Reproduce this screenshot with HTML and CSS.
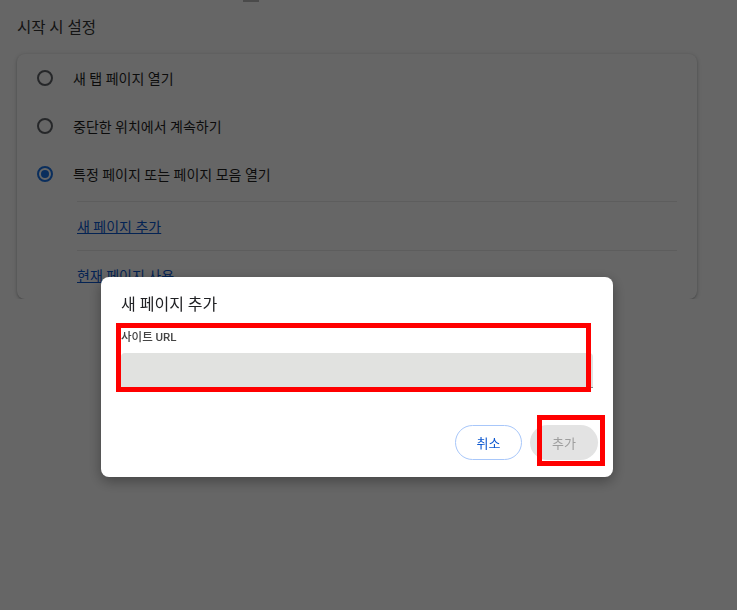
FILE: index.html
```html
<!DOCTYPE html>
<html lang="ko">
<head>
  <meta charset="UTF-8">
  <meta name="viewport" content="width=device-width, initial-scale=1.0">
  <title>시작 시 설정</title>
  <link rel="stylesheet" href="styles.css">
</head>
<body>
  <div class="page">
    <div class="top-notch"></div>
    <h2 class="section-title">시작 시 설정</h2>

    <div class="card">
      <div class="radio-row">
        <span class="radio"></span>
        <span>새 탭 페이지 열기</span>
      </div>
      <div class="radio-row">
        <span class="radio"></span>
        <span>중단한 위치에서 계속하기</span>
      </div>
      <div class="radio-row">
        <span class="radio checked"></span>
        <span>특정 페이지 또는 페이지 모음 열기</span>
      </div>
      <div class="page-list">
        <div class="link-row"><a href="#">새 페이지 추가</a></div>
        <div class="link-row"><a href="#">현재 페이지 사용</a></div>
      </div>
    </div>
  </div>

  <div class="backdrop"></div>

  <div class="dialog">
    <div class="dialog-title">새 페이지 추가</div>
    <label class="field-label" for="siteUrl">사이트 URL</label>
    <input class="field-input" type="text" id="siteUrl">
    <div class="dialog-buttons">
      <button class="btn btn-cancel">취소</button>
      <button class="btn btn-add" disabled>추가</button>
    </div>

    <!-- highlight marks -->
    <div class="mark mark-input"></div>
    <div class="mark mark-button"></div>
  </div>
</body>
</html>
```

FILE: styles.css
```css
body {
  margin: 0;
  background: #fff;
  font-family: Roboto, "Noto Sans CJK KR", sans-serif;
  color: #1f1f1f;
}
.page {
  padding: 0 40px 0 17px;
}
.top-notch {
  width: 16px;
  height: 2px;
  margin-left: 226px;
  background: #b9b9b9;
}
.section-title {
  margin: 16px 0 17px;
  font-size: 15.5px;
  font-weight: normal;
  line-height: 20px;
  color: #333;
}
.card {
  background: #fff;
  border-radius: 8px;
  box-shadow: 0 1px 2px rgba(60, 64, 67, 0.3), 0 1px 4px 1px rgba(60, 64, 67, 0.15);
}
.radio-row {
  display: flex;
  align-items: center;
  gap: 20px;
  height: 48px;
  margin-top: -1px;
  margin-bottom: 1px;
  padding-left: 20px;
  font-size: 14px;
}
.radio {
  box-sizing: border-box;
  width: 16px;
  height: 16px;
  border: 2px solid #5f6368;
  border-radius: 50%;
  display: flex;
  align-items: center;
  justify-content: center;
}
.radio.checked {
  border-color: #1a73e8;
}
.radio.checked::after {
  content: "";
  width: 8px;
  height: 8px;
  border-radius: 50%;
  background: #1a73e8;
}
.page-list {
  margin: 3px 20px 0 60px;
}
.link-row {
  display: flex;
  align-items: center;
  height: 48px;
  border-top: 1px solid #e8e8e8;
  font-size: 14px;
}
.link-row a {
  color: #0b57d0;
}
.backdrop {
  position: fixed;
  left: 0;
  top: 0;
  width: 100%;
  height: 100%;
  background-color: rgba(0, 0, 0, 0.6);
}
.dialog {
  position: fixed;
  left: 101px;
  top: 277px;
  box-sizing: border-box;
  width: 512px;
  height: 200px;
  padding: 18px 20px 17px;
  background: #fff;
  border-radius: 8px;
  box-shadow: 0 4px 14px rgba(0, 0, 0, 0.35);
}
.dialog-title {
  font-size: 16px;
  line-height: 20px;
  color: #202124;
}
.field-label {
  display: block;
  margin: 15px 0 9px;
  font-size: 11.5px;
  line-height: 14px;
  font-weight: 500;
  color: #444;
}
.field-input {
  display: block;
  box-sizing: border-box;
  width: 100%;
  height: 35px;
  border: none;
  border-bottom: 1px solid #80868b;
  border-radius: 4px 4px 0 0;
  background: #e1e2e0;
}
.dialog-buttons {
  display: flex;
  justify-content: flex-end;
  gap: 8px;
  margin: 37px -5px 0 0;
}
.btn {
  box-sizing: border-box;
  height: 35px;
  border-radius: 18px;
  font-family: Roboto, "Noto Sans CJK KR", sans-serif;
  font-size: 13px;
}
.btn-cancel {
  width: 67px;
  background: #fff;
  border: 1px solid #a8c7fa;
  color: #0b57d0;
}
.btn-add {
  width: 68px;
  background: #e3e3e3;
  border: none;
  color: #9e9e9e;
}
.mark {
  position: absolute;
  box-sizing: border-box;
  border: 5px solid #ff0000;
}
.mark-input {
  left: 15px;
  top: 46px;
  width: 475px;
  height: 69px;
}
.mark-button {
  left: 436px;
  top: 138px;
  width: 68px;
  height: 51px;
}
```
